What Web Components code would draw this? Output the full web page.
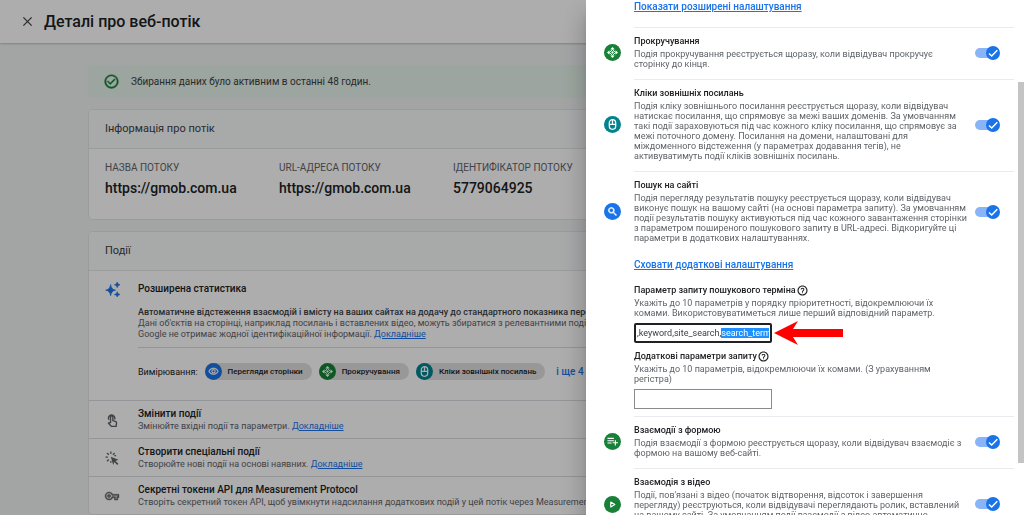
<!DOCTYPE html>
<html lang="uk">
<head>
<meta charset="utf-8">
<title>Деталі про веб-потік</title>
<style>
  html, body { margin: 0; height: 100%; overflow: hidden; }
  body { font-family: Roboto, "Noto Sans", sans-serif; background: #f1f3f4; color: #3c4043; }
</style>
</head>
<body>
<stream-app></stream-app>

<script>
const ICONS = {
  close: '<path d="M3 3L21 21M21 3L3 21" stroke="currentColor" stroke-width="2.800" fill="none"/>',
  ok: '<path d="M16.600 7.600L10 14.200l-3.600-3.600L5 12l5 5 8-8zM12 1C5.900 1 1 5.900 1 12s4.900 11 11 11 11-4.900 11-11S18.100 1 12 1zm0 19.700c-4.800 0-8.700-3.900-8.700-8.700S7.200 3.300 12 3.300s8.700 3.900 8.700 8.700-3.900 8.700-8.700 8.700z" stroke="currentColor" stroke-width=".6"/>',
  help: '<path d="M11 18h2v-2h-2v2zm1-17C5.900 1 1 5.900 1 12s4.900 11 11 11 11-4.900 11-11S18.100 1 12 1zm0 19.500c-4.700 0-8.500-3.800-8.500-8.500S7.300 3.500 12 3.500s8.500 3.800 8.500 8.500-3.800 8.500-8.500 8.500zM12 6c-2.210 0-4 1.790-4 4h2.200c0-1.100.8-1.900 1.800-1.900s1.900.9 1.900 1.900c0 2-3 1.750-3 5h2.200c0-2.250 3-2.500 3-5 0-2.210-1.890-4-4.100-4z"/>',
  sparkle: '<path d="M9 4Q10 12 17 13Q10 14 9 22Q8 14 1 13Q8 12 9 4ZM19.500 0Q20 4 24 4.500Q20 5 19.500 9Q19 5 15 4.500Q19 4 19.500 0ZM19.500 15.500Q20 19.500 24 20Q20 20.500 19.500 24Q19 20.500 15 20Q19 19.500 19.500 15.500Z" stroke="currentColor" stroke-width="1"/>',
  touch: '<g fill="none" stroke="currentColor" stroke-width="2.400"><path d="M6.500 11.500A5.500 5.500 0 1 1 16.500 11M9.500 16.500V7a2 2 0 0 1 4 0v6l5 1.800q1.500.6 1.300 2.200l-.8 6H11l-5-5.500 1-1z"/></g>',
  click: '<path d="M10 10l13 5-5 2 5 5-2 2-5-5-2 5z"/><path d="M10 1v4M3.500 3.500l3 3M1 10.500h4M3.500 17.500l3-3M16.500 3.500l-3 3M10 20v-3M19 8h-3" stroke="currentColor" stroke-width="2.200" fill="none"/>',
  key: '<path d="M22 19h-6v-4h-2.680c-1.140 2.420-3.600 4-6.320 4-3.860 0-7-3.140-7-7s3.140-7 7-7c2.720 0 5.170 1.580 6.320 4H24v6h-2v4zm-4-2h2v-4h2v-2H11.940l-.23-.67C11.010 8.340 9.110 7 7 7c-2.760 0-5 2.240-5 5s2.240 5 5 5c2.110 0 4.010-1.340 4.710-3.330l.23-.67H18v4zM7 15c-1.650 0-3-1.350-3-3s1.350-3 3-3 3 1.350 3 3-1.350 3-3 3zm0-4c-.55 0-1 .45-1 1s.45 1 1 1 1-.45 1-1-.45-1-1-1z" stroke="currentColor" stroke-width=".6"/>',
  eye: '<path d="M12 6c3.790 0 7.170 2.130 8.820 5.500C19.170 14.870 15.790 17 12 17s-7.170-2.130-8.820-5.500C4.830 8.130 8.210 6 12 6m0-2C7 4 2.730 7.110 1 11.500 2.730 15.890 7 19 12 19s9.270-3.110 11-7.500C21.270 7.110 17 4 12 4zm0 5c1.380 0 2.500 1.120 2.500 2.500S13.380 14 12 14s-2.500-1.120-2.500-2.500S10.620 9 12 9m0-2c-2.480 0-4.500 2.020-4.500 4.500S9.520 16 12 16s4.500-2.020 4.500-4.500S14.480 7 12 7z" stroke="currentColor" stroke-width=".5"/>',
  scroll: '<path d="M12 0l5 5.500H7zM12 24l5-5.500H7zM0 12l5.500-5v10zM24 12l-5.500-5v10z"/><circle cx="12" cy="12" r="2.500"/><path d="M12 5.500l6.500 6.500-6.500 6.500L5.500 12z" fill="none" stroke="currentColor" stroke-width="2"/>',
  mouse: '<g fill="none" stroke="currentColor" stroke-width="2.800"><rect x="5" y="1.500" width="14" height="21" rx="7"/><path d="M5 11.500h14M12 2v9.500"/></g>',
  search: '<path d="M15.500 14h-.79l-.28-.27C15.410 12.590 16 11.110 16 9.500 16 5.910 13.090 3 9.500 3S3 5.910 3 9.500 5.910 16 9.500 16c1.610 0 3.090-.59 4.230-1.570l.27.28v.79l5.500 5.500L21 19.500l-5.500-5.500zm-6 0C7.010 14 5 11.990 5 9.500S7.010 5 9.500 5 14 7.010 14 9.500 11.990 14 9.500 14z" stroke="currentColor" stroke-width="1.200"/>',
  form: '<path d="M15 9H1v2.500h14V9zm0-5H1v2.500h14V4zm4.500 9.500V9H17v4.500h-4.500V16H17v4.500h2.500V16H24v-2.500h-4.500zM1 16.500h9V14H1v2.500z"/>',
  play: '<path d="M6 3.500L20 12L6 20.500Z" fill="none" stroke="currentColor" stroke-width="4" stroke-linejoin="round"/>'
};

function define(name, render, after) {
  customElements.define(name, class extends HTMLElement {
    connectedCallback() {
      if (this.shadowRoot) return;
      const root = this.attachShadow({ mode: 'open' });
      root.innerHTML = render(this);
      if (after) after(root, this);
    }
  });
}

define('ui-icon', el => `
<style>
  :host { display: block; width: 14px; height: 14px; flex: none; }
  svg { display: block; width: 100%; height: 100%; overflow: visible; }
</style>
<svg viewBox="0 0 24 24" fill="currentColor" aria-hidden="true">${ICONS[el.getAttribute('name')]}</svg>`);

define('round-icon', el => `
<style>
  :host { display: grid; place-items: center; width: 17px; height: 17px; flex: none; border-radius: 50%;
          color: #fff; background: var(--tone, #188038); }
  ui-icon { width: 11px; height: 11px; }
  :host([name="play"]) ui-icon { width: 7px; height: 7px; }
</style>
<ui-icon name="${el.getAttribute('name')}"></ui-icon>`);

define('text-link', () => `
<style>
  :host { display: inline; }
  a { color: #1a73e8; text-decoration: underline; }
</style>
<a href="#"><slot></slot></a>`);

define('top-bar', () => `
<style>
  :host { display: block; background: #fff; box-shadow: 0 1px 2px rgba(60,64,67,.3); }
  header { display: flex; align-items: center; gap: 11px; height: 43px; padding: 0 22px; box-sizing: border-box; }
  button { border: 0; padding: 0; background: none; color: #3c4043; }
  ui-icon { width: 11px; height: 11px; }
  h1 { margin: 0; font-size: 16px; line-height: 20px; font-weight: 500; color: #202124; }
</style>
<header><button type="button" aria-label="Закрити"><ui-icon name="close"></ui-icon></button><h1><slot></slot></h1></header>`);

define('status-banner', () => `
<style>
  :host { display: flex; align-items: center; gap: 12px; height: 33px; padding: 0 16px; border-radius: 4px;
          background: #e6f4ea; font-size: 10px; line-height: 14px; color: #3c4043; }
  ui-icon { color: #188038; width: 15px; height: 15px; }
</style>
<ui-icon name="ok"></ui-icon><span><slot></slot></span>`);

define('info-card', el => `
<style>
  :host { display: block; background: #fff; border: 1px solid #e3e5e8; border-radius: 5px; overflow: hidden; }
  h2 { margin: 0; padding: 12px 16px; font-size: 11px; line-height: 14px; font-weight: 400; color: #3c4043;
       background: #f8f9fa; border-bottom: 1px solid #e3e5e8; }
</style>
<h2>${el.getAttribute('heading')}</h2><slot></slot>`);

define('stream-facts', () => `
<style>
  :host { display: grid; grid-template-columns: repeat(auto-fill, minmax(172px, 174px)); padding: 12px 16px 22px; }
</style>
<slot></slot>`);

define('stream-fact', el => `
<style>
  :host { display: block; white-space: nowrap; }
  small { display: block; font-size: 10px; line-height: 14px; color: #5f6368; }
  strong { display: block; margin-top: 4px; font-size: 14px; line-height: 18px; font-weight: 500; color: #202124; }
</style>
<small>${el.getAttribute('label')}</small><strong><slot></slot></strong>`);

define('event-chip', el => `
<style>
  :host { display: flex; align-items: center; gap: 6px; height: 17px; padding-right: 9px; border-radius: 9px;
          background: #e0e0e0; font-size: 8px; line-height: 12px; font-weight: 500; color: #202124; white-space: nowrap; }
</style>
<round-icon name="${el.getAttribute('icon')}"></round-icon><slot></slot>`);

define('enhanced-row', () => `
<style>
  :host { display: grid; grid-template-columns: 33px 1fr; padding: 10px 0 20px 16px; white-space: nowrap; }
  ui-icon { width: 15px; height: 15px; color: #1a73e8; margin-top: 1px; }
  h3 { margin: 0 0 10px; font-size: 10px; line-height: 16px; font-weight: 500; color: #202124; }
  p { margin: 0; font-size: 9px; line-height: 11px; color: #5f6368; }
  b { font-weight: 500; color: #3c4043; }
  .chips { display: flex; align-items: center; gap: 7px; margin-top: 7px; padding-top: 15px; border-top: 1px solid #dadce0;
           font-size: 9px; line-height: 14px; color: #202124; }
  .more { border: 0; background: none; padding: 0; margin-left: 4px; font: 500 10px/14px Roboto, sans-serif; color: #1a73e8; }
</style>
<ui-icon name="sparkle"></ui-icon>
<div>
  <h3>Розширена статистика</h3>
  <p><b>Автоматичне відстеження взаємодій і вмісту на ваших сайтах на додачу до стандартного показника перегляду</b><br>
  Дані об'єктів на сторінці, наприклад посилань і вставлених відео, можуть збиратися з релевантними подіями.<br>
  Google не отримає жодної ідентифікаційної інформації.<text-link>Докладніше</text-link></p>
  <div class="chips">
    <span>Вимірювання:</span>
    <event-chip icon="eye" style="--tone:#1a73e8">Перегляди сторінки</event-chip>
    <event-chip icon="scroll">Прокручування</event-chip>
    <event-chip icon="mouse" style="--tone:#00838f">Кліки зовнішніх посилань</event-chip>
    <button class="more" type="button">і ще 4</button>
  </div>
</div>`);

define('action-row', el => `
<style>
  :host { display: grid; grid-template-columns: 33px 1fr; align-items: center; height: 37px; padding-left: 16px;
          border-top: 1px solid #dadce0; white-space: nowrap; }
  ui-icon { color: #5f6368; }
  h3 { margin: 0; font-size: 10px; line-height: 13px; font-weight: 500; color: #202124; }
  p { margin: 0; font-size: 9px; line-height: 12px; color: #5f6368; }
</style>
<ui-icon name="${el.getAttribute('icon')}"></ui-icon>
<div><h3>${el.getAttribute('heading')}</h3><p><slot></slot></p></div>`);

define('toggle-switch', el => `
<style>
  :host { display: block; flex: none; }
  label { display: block; position: relative; width: 25px; height: 14px; }
  input { position: absolute; inset: 0; width: 100%; height: 100%; margin: 0; opacity: 0; }
  svg { display: block; overflow: visible; }
</style>
<label><input type="checkbox" role="switch" checked aria-label="${el.getAttribute('label')}">
<svg width="25" height="14" viewBox="0 0 25 14" aria-hidden="true">
  <rect x="0" y="2" width="22" height="10" rx="5" fill="#8ab4f8"/>
  <circle cx="18" cy="7" r="7" fill="#1a73e8"/>
  <path d="M14 7.500L16.700 10L22.300 4.300" fill="none" stroke="#fff" stroke-width="1.500"/>
</svg></label>`);

define('setting-section', el => `
<style>
  :host { display: grid; grid-template-columns: 30px 1fr; }
  .body { border-top: 1px solid #e8eaed; min-width: 0; grid-column: 2; }
  .row { display: flex; align-items: center; justify-content: space-between; padding: 8px 14px 10px 0; min-height: var(--row-min, 0); }
  .row > div { align-self: flex-start; }
  round-icon { margin-left: -30px; margin-right: 13px; }
  toggle-switch { margin-left: auto; }
  h3 { margin: 0 0 2px; font-size: 9px; line-height: 11px; font-weight: 500; color: #202124; }
  p { margin: 0; font-size: 9px; line-height: 10px; color: #5f6368; white-space: nowrap; }
</style>
<div class="body">
  <div class="row">
    <round-icon name="${el.getAttribute('icon')}"></round-icon>
    <div><h3>${el.getAttribute('heading')}</h3><p><slot></slot></p></div>
    <toggle-switch label="${el.getAttribute('heading')}"></toggle-switch>
  </div>
  <slot name="extra"></slot>
</div>`);

define('param-field', el => `
<style>
  :host { display: block; }
  .head { display: flex; align-items: center; gap: 1px; height: 12px; }
  label { font-size: 9px; line-height: 12px; font-weight: 500; color: #202124; }
  .help { border: 0; background: none; padding: 0; color: #202124; }
  .help ui-icon { width: 11px; height: 11px; }
  p { margin: 2px 0 5px; font-size: 9px; line-height: 10px; color: #5f6368; white-space: nowrap; }
  .line { display: flex; align-items: center; gap: 2px; height: 20px; }
  input { box-sizing: border-box; width: 138px; height: 20px; margin: 0; padding: 0 2px; border: 1px solid #8a8a8a; background: #fff;
          font: 9px/16px Roboto, sans-serif; color: #3c4043; border-radius: 0; outline: 0; caret-color: transparent; }
  input:focus { border: 2px solid #202124; border-radius: 2px; padding: 0 1px; }
  input::selection { background: #1e90ff; color: #fff; }
</style>
<div class="head"><label for="f">${el.getAttribute('label')}</label>
<button class="help" type="button" aria-label="Довідка"><ui-icon name="help"></ui-icon></button></div>
<p><slot></slot></p>
<div class="line"><input id="f" type="text" value="${el.getAttribute('value') || ''}"><slot name="after"></slot></div>`,
(root, el) => {
  const picked = el.getAttribute('selected');
  if (!picked) return;
  const input = root.querySelector('input');
  input.focus();
  input.setSelectionRange(input.value.indexOf(picked), input.value.length);
});

define('red-arrow', () => `
<style>
  :host { display: block; flex: none; }
  svg { display: block; overflow: visible; }
</style>
<svg width="69" height="20" viewBox="0 0 69 20" aria-hidden="true"><path d="M0 10L24 -2L19 6H69V14H19L24 22Z" fill="#f00"/></svg>`);

define('settings-drawer', () => `
<style>
  :host { display: block; position: fixed; top: 0; right: 0; bottom: 0; width: 438px; max-width: 100%; box-sizing: border-box;
          background: #fff; overflow: hidden; padding: 0 10px 0 18px;
          box-shadow: 0 8px 10px -5px rgba(0,0,0,.2), 0 16px 24px 2px rgba(0,0,0,.24); }
  .thumb { position: absolute; right: 0; top: 16%; height: 74%; width: 6px; background: #c4c4c4; }
  .link { display: block; font-size: 10px; line-height: 12px; font-weight: 500; white-space: nowrap; }
  .top { padding: 1px 0 14px 30px; }
  .extra { padding-bottom: 7px; }
  .extra .link { padding: 6px 0 13px; }
  param-field + param-field { margin-top: 7px; }
</style>
<div class="link top"><text-link>Показати розширені налаштування</text-link></div>
<setting-section icon="scroll" heading="Прокручування">Подія прокручування реєструється щоразу, коли відвідувач прокручує<br>сторінку до кінця.</setting-section>
<setting-section icon="mouse" style="--tone:#00838f" heading="Кліки зовнішніх посилань">Подія кліку зовнішнього посилання реєструється щоразу, коли відвідувач<br>натискає посилання, що спрямовує за межі ваших доменів. За умовчанням<br>такі події зараховуються під час кожного кліку посилання, що спрямовує за<br>межі поточного домену. Посилання на домени, налаштовані для<br>міждоменного відстеження (у параметрах додавання тегів), не<br>активуватимуть події кліків зовнішніх посилань.</setting-section>
<setting-section icon="search" style="--tone:#1a73e8" heading="Пошук на сайті">Подія перегляду результатів пошуку реєструється щоразу, коли відвідувач<br>виконує пошук на вашому сайті (на основі параметра запиту). За умовчанням<br>події результатів пошуку активуються під час кожного завантаження сторінки<br>з параметром поширеного пошукового запиту в URL-адресі. Відкоригуйте ці<br>параметри в додаткових налаштуваннях.
  <div slot="extra" class="extra">
    <div class="link"><text-link>Сховати додаткові налаштування</text-link></div>
    <param-field label="Параметр запиту пошукового терміна" value=",keyword,site_search,search_term" selected="search_term">Укажіть до 10 параметрів у порядку пріоритетності, відокремлюючи їх<br>комами. Використовуватиметься лише перший відповідний параметр.<red-arrow slot="after"></red-arrow></param-field>
    <param-field label="Додаткові параметри запиту">Укажіть до 10 параметрів, відокремлюючи їх комами. (З урахуванням<br>регістра)</param-field>
  </div>
</setting-section>
<setting-section icon="form" heading="Взаємодії з формою">Подія взаємодії з формою реєструється щоразу, коли відвідувач взаємодіє з<br>формою на вашому веб-сайті.</setting-section>
<setting-section icon="play" style="--row-min:54px" heading="Взаємодія з відео">Події, пов'язані з відео (початок відтворення, відсоток і завершення<br>перегляду) реєструються, коли відвідувачі переглядають ролик, вставлений<br>на вашому сайті. За умовчанням події взаємодії з відео автоматично</setting-section>
<div class="thumb"></div>`);

define('stream-app', () => `
<style>
  :host { display: block; min-height: 100%; }
  main { display: grid; gap: 11px; padding: 22px 88px 0; grid-template-columns: minmax(0, 1fr); }
  .scrim { position: fixed; inset: 0; background: rgba(0,0,0,.32); }
</style>
<top-bar>Деталі про веб-потік</top-bar>
<main>
  <status-banner>Збирання даних було активним в останні 48 годин.</status-banner>
  <info-card heading="Інформація про потік">
    <stream-facts>
      <stream-fact label="НАЗВА ПОТОКУ">https://gmob.com.ua</stream-fact>
      <stream-fact label="URL-АДРЕСА ПОТОКУ">https://gmob.com.ua</stream-fact>
      <stream-fact label="ІДЕНТИФІКАТОР ПОТОКУ">5779064925</stream-fact>
    </stream-facts>
  </info-card>
  <info-card heading="Події">
    <enhanced-row></enhanced-row>
    <action-row icon="touch" heading="Змінити події">Змінюйте вхідні події та параметри. <text-link>Докладніше</text-link></action-row>
    <action-row icon="click" heading="Створити спеціальні події">Створюйте нові події на основі наявних. <text-link>Докладніше</text-link></action-row>
    <action-row icon="key" heading="Секретні токени API для Measurement Protocol">Створіть секретний токен API, щоб увімкнути надсилання додаткових подій у цей потік через Measurement Protocol.</action-row>
  </info-card>
</main>
<div class="scrim"></div>
<settings-drawer></settings-drawer>`);
</script>
</body>
</html>
